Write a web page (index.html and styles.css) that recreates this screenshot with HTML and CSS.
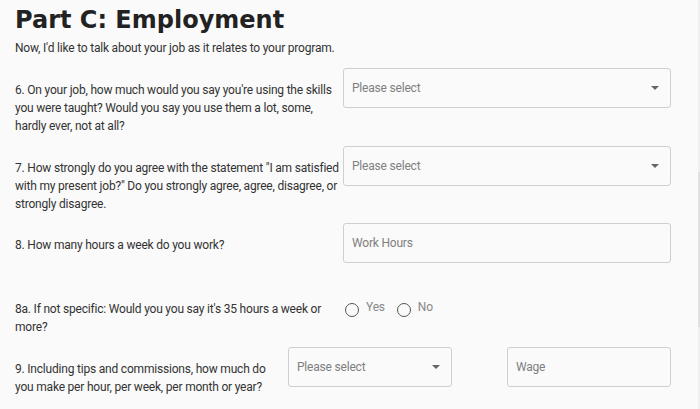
FILE: index.html
```html
<!DOCTYPE html>
<html lang="en">
<head>
<meta charset="utf-8">
<title>Part C: Employment</title>
<link rel="stylesheet" href="styles.css">
</head>
<body>
<div class="page">
  <h1 class="title">Part C: Employment</h1>
  <p class="intro">Now, I'd like to talk about your job as it relates to your program.</p>

  <div class="row">
    <div class="label">6. On your job, how much would you say you're using the skills you were taught? Would you say you use them a lot, some, hardly ever, not at all?</div>
    <div class="controls">
      <div class="field select"><span class="ph">Please select</span><span class="caret"></span></div>
    </div>
  </div>

  <div class="row">
    <div class="label">7. How strongly do you agree with the statement "I am satisfied with my present job?" Do you strongly agree, agree, disagree, or strongly disagree.</div>
    <div class="controls">
      <div class="field select"><span class="ph">Please select</span><span class="caret"></span></div>
    </div>
  </div>

  <div class="row">
    <div class="label">8. How many hours a week do you work?</div>
    <div class="controls">
      <div class="field"><span class="ph">Work Hours</span></div>
    </div>
  </div>

  <div class="row">
    <div class="label">8a. If not specific: Would you you say it's 35 hours a week or more?</div>
    <div class="controls radios">
      <label class="radio"><span class="circle"></span><span class="rtext">Yes</span></label>
      <label class="radio"><span class="circle"></span><span class="rtext">No</span></label>
    </div>
  </div>

  <div class="row row-split">
    <div class="label">9. Including tips and commissions, how much do you make per hour, per week, per month or year?</div>
    <div class="controls">
      <div class="field select"><span class="ph">Please select</span><span class="caret"></span></div>
    </div>
    <div class="controls wage">
      <div class="field"><span class="ph">Wage</span></div>
    </div>
  </div>
</div>
<div class="scrollbar"><div class="thumb"></div></div>
</body>
</html>
```
FILE: styles.css
```css
html, body {
  margin: 0;
  padding: 0;
  background: #fafafa;
}
body {
  font-family: Roboto, "Liberation Sans", Arial, sans-serif;
  color: #333;
  width: 700px;
  height: 409px;
  overflow: hidden;
  position: relative;
  letter-spacing: -0.2px;
}
.page {
  width: 656px;
  padding: 0 0 0 15px;
}
.title {
  font-family: "DejaVu Sans", "Liberation Sans", sans-serif;
  font-weight: bold;
  font-size: 24px;
  line-height: 28px;
  letter-spacing: 0;
  color: #222;
  margin: 6px 0 0 0;
}
.intro {
  font-size: 12px;
  line-height: 18px;
  margin: 5px 0 0 0;
  color: #333;
}
.row {
  display: grid;
  grid-template-columns: 328px 328px;
  align-items: start;
}
.intro + .row { margin-top: 11px; }
.row-split {
  grid-template-columns: 273px 164px 219px;
}
.row-split .label {
  padding-right: 14px;
}
.wage {
  padding-left: 55px;
}
.label {
  font-size: 12px;
  line-height: 18px;
  padding: 13px 0 10.5px 0;
  color: #333;
}
.controls {
  margin-bottom: 24px;
}
.field {
  box-sizing: border-box;
  height: 40px;
  border: 1px solid #cfcfcf;
  border-radius: 3px;
  background: #fafafa;
  display: flex;
  align-items: center;
  padding: 0 12px 0 8px;
}
.select { justify-content: space-between; }
.ph {
  font-size: 12px;
  color: #808080;
}
.caret {
  width: 0;
  height: 0;
  border-left: 4px solid transparent;
  border-right: 4px solid transparent;
  border-top: 4px solid #666;
  margin-right: -1px;
}
.radios {
  display: flex;
  gap: 12px;
  padding-top: 15px;
  margin-left: 2px;
}
.radio {
  display: flex;
  align-items: flex-start;
}
.circle {
  box-sizing: border-box;
  width: 14px;
  height: 14px;
  border: 1.5px solid #555;
  border-radius: 50%;
  margin-top: 1px;
}
.rtext {
  font-size: 12px;
  color: #888;
  margin-left: 7px;
  line-height: 12px;
  margin-top: -1px;
}
.scrollbar {
  position: absolute;
  right: 0;
  top: 0;
  width: 2px;
  height: 409px;
  background: #efefef;
}
.thumb {
  margin-top: 172px;
  height: 155px;
  background: #e2e2e2;
}
```
